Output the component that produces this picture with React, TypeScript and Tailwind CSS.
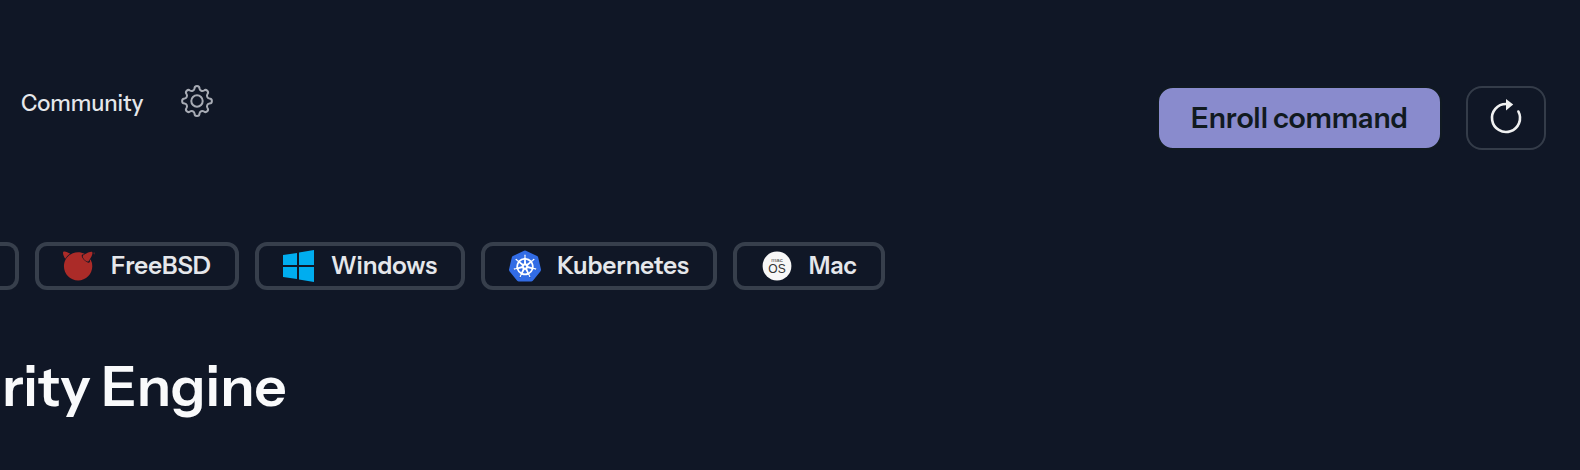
import type { ReactNode } from 'react'
import { SiFreebsd, SiKubernetes } from 'react-icons/si'

function GearIcon() {
  return (
    <svg viewBox="-16 -15 32 32" className="w-8 h-8 overflow-visible" fill="none" stroke="currentColor" strokeWidth="2" strokeLinejoin="round" aria-hidden="true">
      <path d="M-2.5 -12.4A2.5 2.5 0 0 1 2.5 -12.4A2.9 2.9 0 0 0 7 -10.5A2.5 2.5 0 0 1 10.5 -7A2.9 2.9 0 0 0 12.4 -2.5A2.5 2.5 0 0 1 12.4 2.5A2.9 2.9 0 0 0 10.5 7A2.5 2.5 0 0 1 7 10.5A2.9 2.9 0 0 0 2.5 12.4A2.5 2.5 0 0 1 -2.5 12.4A2.9 2.9 0 0 0 -7 10.5A2.5 2.5 0 0 1 -10.5 7A2.9 2.9 0 0 0 -12.4 2.5A2.5 2.5 0 0 1 -12.4 -2.5A2.9 2.9 0 0 0 -10.5 -7A2.5 2.5 0 0 1 -7 -10.5A2.9 2.9 0 0 0 -2.5 -12.4Z" />
      <circle r="5.7" />
    </svg>
  )
}

function RefreshIcon() {
  return (
    <svg viewBox="0 1 32 36" className="w-8 h-9 overflow-visible" fill="none" aria-hidden="true">
      <path d="M16 5A14 14 0 1 0 28.4 12.5" stroke="currentColor" strokeWidth="2.6" strokeLinecap="round" />
      <path d="M16 0L23.2 5.5L16 11.4Z" fill="currentColor" />
    </svg>
  )
}

function WindowsIcon() {
  return (
    <svg viewBox="0 0 32 32" className="w-8 h-8" fill="#00adef" aria-hidden="true">
      <path d="M0 5L14 3V15.1H0ZM16 2.6L31 0V15.1H16ZM0 17H14V29L0 27ZM16 17H31V32L16 29.6Z" />
    </svg>
  )
}

function KubernetesIcon() {
  return (
    <span className="relative flex w-8 h-8 items-center justify-center">
      <span className="absolute w-6 h-6 rounded-full bg-white" />
      <SiKubernetes className="relative w-8 h-8 text-[#326ce5]" />
    </span>
  )
}

function MacIcon() {
  return (
    <svg viewBox="0 0 32 32" className="w-8 h-8 font-['Liberation_Sans',Arial,sans-serif] font-normal" aria-hidden="true">
      <circle cx="16" cy="16" r="14.4" fill="#f7f7f7" />
      <text x="16" y="11.5" textAnchor="middle" fontSize="6" fill="#444">mac</text>
      <text x="16" y="23" textAnchor="middle" fontSize="12" fill="#333">OS</text>
    </svg>
  )
}

function PlatformButton({ icon, label }: { icon: ReactNode; label: string }) {
  return (
    <button className="flex h-12 shrink-0 items-center gap-4 rounded-xl border-4 border-[#373f4c] px-6 text-2xl font-semibold text-[#e5e7eb]">
      {icon}
      {label}
    </button>
  )
}

const platforms = [
  { label: 'FreeBSD', icon: <SiFreebsd className="w-8 h-8 text-[#ab2b28]" /> },
  { label: 'Windows', icon: <WindowsIcon /> },
  { label: 'Kubernetes', icon: <KubernetesIcon /> },
  { label: 'Mac', icon: <MacIcon /> },
]

export default function App() {
  return (
    <main className="min-h-screen overflow-hidden bg-[#101726] pt-[86px] font-['Instrument_Sans',Inter,sans-serif]">
      <header className="flex items-start justify-between pr-[34px] pl-[21px]">
        <nav className="flex items-start gap-[38px]">
          <a href="#community" className="text-[22px] leading-9 font-medium text-[#e5e7eb]">Community</a>
          <button aria-label="Settings" className="text-[#a7abb4]">
            <GearIcon />
          </button>
        </nav>
        <div className="flex items-center gap-6">
          <button className="h-16 rounded-2xl border-2 border-[#111a22] bg-[#898bcd] px-8 text-[28px] font-semibold text-[#111a1f]">
            Enroll command
          </button>
          <button aria-label="Refresh" className="flex h-16 w-20 items-center justify-center rounded-2xl border-2 border-[#343c49] text-[#f0f1f1]">
            <RefreshIcon />
          </button>
        </div>
      </header>

      <section className="mt-[92px] flex gap-4">
        <div className="h-12 w-[19px] shrink-0 rounded-r-xl border-4 border-l-0 border-[#373f4c]" />
        {platforms.map((platform) => (
          <PlatformButton key={platform.label} icon={platform.icon} label={platform.label} />
        ))}
      </section>

      <h1 className="mt-[60px] pl-0.5 text-[56px] leading-[72px] font-semibold text-[#f9fafb]">rity Engine</h1>
    </main>
  )
}
